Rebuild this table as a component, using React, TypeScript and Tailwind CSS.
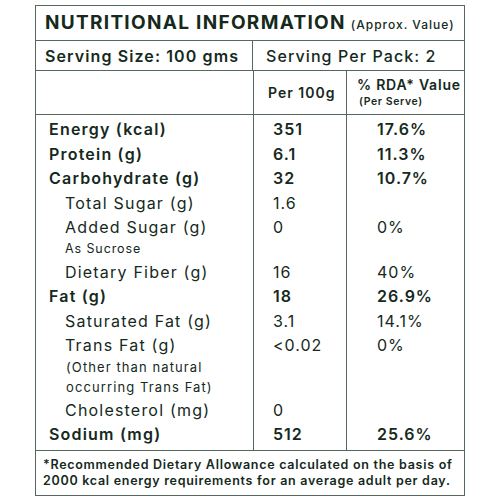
const rows: {
  label: string;
  per100: string;
  rda: string;
  bold?: boolean;
  notes?: string[];
  noteClass?: string;
}[] = [
  { label: "Energy (kcal)", per100: "351", rda: "17.6%", bold: true },
  { label: "Protein (g)", per100: "6.1", rda: "11.3%", bold: true },
  { label: "Carbohydrate (g)", per100: "32", rda: "10.7%", bold: true },
  { label: "Total Sugar (g)", per100: "1.6", rda: "" },
  {
    label: "Added Sugar (g)",
    per100: "0",
    rda: "0%",
    notes: ["As Sucrose"],
    noteClass: "text-[12.5px] tracking-[0.9px] pl-[29px]",
  },
  { label: "Dietary Fiber (g)", per100: "16", rda: "40%" },
  { label: "Fat (g)", per100: "18", rda: "26.9%", bold: true },
  { label: "Saturated Fat (g)", per100: "3.1", rda: "14.1%" },
  {
    label: "Trans Fat (g)",
    per100: "<0.02",
    rda: "0%",
    notes: ["(Other than natural", "occurring Trans Fat)"],
    noteClass: "text-[13px] tracking-[1.1px] pl-[30px]",
  },
  { label: "Cholesterol (mg)", per100: "0", rda: "" },
  { label: "Sodium (mg)", per100: "512", rda: "25.6%", bold: true },
];

const cols = "grid grid-cols-[218px_93px_1fr]";

export default function App() {
  return (
    <div className="w-[500px] h-[500px] bg-white pt-[5px] pl-[35px] font-['Inter',sans-serif] text-[#15291c]">
      <div className="w-[430px] border border-[#56685b]">
        <div className="h-[35px] border-b border-[#56685b] flex items-center pl-[9px] gap-[5px]">
          <span className="text-[19px] font-bold tracking-[1.3px]">NUTRITIONAL INFORMATION</span>
          <span className="text-[12px] font-medium tracking-[1px] mt-[4px]">(Approx. Value)</span>
        </div>
        <div className="h-[30px] border-b border-[#56685b] grid grid-cols-[217px_1fr]">
          <div className="border-r border-[#56685b] flex items-center pl-[9px] text-[16px] font-semibold tracking-[1.1px]">
            Serving Size: 100 gms
          </div>
          <div className="flex items-center pl-[13px] text-[16px] font-medium tracking-[1.1px]">
            Serving Per Pack: 2
          </div>
        </div>
        <div className={`${cols} h-[44px] border-b border-[#56685b]`}>
          <div className="border-r border-[#56685b]" />
          <div className="border-r border-[#56685b] flex items-center pl-[14px] text-[14px] font-semibold tracking-[1px]">
            Per 100g
          </div>
          <div className="flex flex-col justify-center pl-[10px] leading-none">
            <span className="text-[14px] font-semibold tracking-[0.8px]">% RDA* Value</span>
            <span className="text-[10.5px] font-semibold tracking-[0.6px] mt-[5px] pl-[2px]">(Per Serve)</span>
          </div>
        </div>
        <div className={`${cols} border-b border-[#56685b]`}>
          <div className="border-r border-[#56685b] pt-[2px] pb-[3px]">
            {rows.map((r) => (
              <div key={r.label}>
                <div
                  className={`h-[24.5px] flex items-center text-[16px] ${
                    r.bold ? "font-semibold tracking-[1.2px] pl-[13px]" : "font-normal tracking-[1.2px] pl-[29px]"
                  }`}
                >
                  {r.label}
                </div>
                {r.notes?.map((n) => (
                  <div key={n} className={`h-[20px] flex items-center ${r.noteClass}`}>
                    {n}
                  </div>
                ))}
              </div>
            ))}
          </div>
          <div className="border-r border-[#56685b] pt-[2px] pb-[3px]">
            {rows.map((r) => (
              <div key={r.label}>
                <div
                  className={`h-[24.5px] flex items-center pl-[19px] text-[16px] tracking-[1px] ${
                    r.bold ? "font-semibold" : ""
                  }`}
                >
                  {r.per100}
                </div>
                {r.notes?.map((n) => <div key={n} className="h-[20px]" />)}
              </div>
            ))}
          </div>
          <div className="pt-[2px] pb-[3px]">
            {rows.map((r) => (
              <div key={r.label}>
                <div
                  className={`h-[24.5px] flex items-center pl-[30px] text-[16px] tracking-[1px] ${
                    r.bold ? "font-semibold" : ""
                  }`}
                >
                  {r.rda}
                </div>
                {r.notes?.map((n) => <div key={n} className="h-[20px]" />)}
              </div>
            ))}
          </div>
        </div>
        <div className="h-[44px] flex flex-col justify-center pl-[7px] text-[12.5px] font-semibold tracking-[0.72px] leading-[16px]">
          <span>*Recommended Dietary Allowance calculated on the basis of</span>
          <span>2000 kcal energy requirements for an average adult per day.</span>
        </div>
      </div>
    </div>
  );
}
